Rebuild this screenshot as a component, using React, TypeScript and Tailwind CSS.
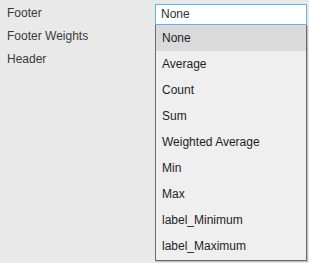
const labels = ['Footer', 'Footer Weights', 'Header'];

const options = [
  'None',
  'Average',
  'Count',
  'Sum',
  'Weighted Average',
  'Min',
  'Max',
  'label_Minimum',
  'label_Maximum',
];

export default function App() {
  const selected = 'None';

  return (
    <div
      className="flex h-[263px] w-[309px] items-start bg-[#e9e9e9] text-[12px]"
      style={{ fontFamily: '"Liberation Sans", Arial, sans-serif' }}
    >
      {/* property names */}
      <div className="w-[155px] pl-[7px] pt-[2px] text-[#3a3a3a]">
        {labels.map((l) => (
          <div key={l} className="h-[23px] leading-[23px]">
            {l}
          </div>
        ))}
      </div>

      {/* open select */}
      <div className="relative mt-[4px] w-[152px]">
        <div className="h-[21px] border border-[#62b0f4] bg-white pl-[5px] leading-[19px] text-[#333]">
          {selected}
        </div>
        <ul className="absolute left-0 top-[21px] w-full border-x border-b border-[#6b6b6b] bg-[#efefef] pb-[1px] text-[#1e1e1e] shadow-[1px_1px_0_#bdbdbd]">
          {options.map((o) => (
            <li
              key={o}
              className={`h-[26px] pl-[6px] leading-[26px] ${o === selected ? 'bg-[#dadada]' : ''}`}
            >
              {o}
            </li>
          ))}
        </ul>
      </div>
    </div>
  );
}
